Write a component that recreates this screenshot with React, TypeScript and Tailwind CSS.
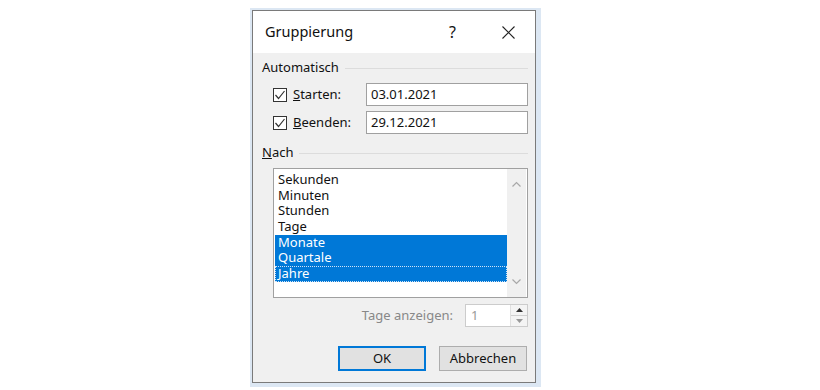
import React from 'react';

const font = { fontFamily: '"Noto Sans", "Open Sans", sans-serif' };

function CheckBox() {
    return (
        <div className="w-[14px] h-[14px] border border-[#333] bg-white flex items-center justify-center">
            <svg width="12" height="12" viewBox="0 0 12 12">
                <path d="M1.5 6 L4.5 9.5 L10.5 2" stroke="#333" strokeWidth="1.2" fill="none" />
            </svg>
        </div>
    );
}

function Chevron({ down }: { down?: boolean }) {
    return (
        <svg width="9" height="6" viewBox="0 0 9 6">
            <path d={down ? 'M0.5 0.5 L4.5 4.5 L8.5 0.5' : 'M0.5 5.5 L4.5 1.5 L8.5 5.5'} stroke="#a8a8a8" strokeWidth="1.2" fill="none" />
        </svg>
    );
}

export default function App() {
    const items = ['Sekunden', 'Minuten', 'Stunden', 'Tage', 'Monate', 'Quartale', 'Jahre'];
    const selected = ['Monate', 'Quartale', 'Jahre'];

    return (
        <div className="w-[820px] h-[390px] bg-white pt-[8px] pl-[250px]" style={font}>
            {/* Window frame with soft shadow */}
            <div className="w-[291px] h-[379px] bg-[#dce7f3] pl-[2px] pt-[2px] pr-[5px] pb-[4px]">
                <div className="w-full h-full border border-[#7a7a7a] bg-[#f0f0f0] flex flex-col text-[13px] text-[#111]">
                    {/* Title bar */}
                    <div className="h-[42px] bg-white flex items-center pl-[12px] pr-[20px] shrink-0">
                        <span className="text-[14.5px] flex-1">Gruppierung</span>
                        <span className="text-[16px] mr-[46px]">?</span>
                        <svg width="13" height="13" viewBox="0 0 13 13">
                            <path d="M0.5 0.5 L12.5 12.5 M12.5 0.5 L0.5 12.5" stroke="#222" strokeWidth="1.1" />
                        </svg>
                    </div>

                    <div className="flex flex-col pl-[9px] pr-[7px] pt-[7px]">
                        {/* Automatisch */}
                        <div className="h-[16px] flex items-center gap-[6px]">
                            <span>Automatisch</span>
                            <div className="flex-1 h-px bg-[#dcdcdc]" />
                        </div>

                        <div className="flex flex-col gap-[5px] mt-[7px] pl-[11px]">
                            <div className="h-[23px] flex items-center">
                                <CheckBox />
                                <span className="ml-[6px] w-[73px]"><span className="underline">S</span>tarten:</span>
                                <div className="flex-1 h-full border border-[#a0a0a0] bg-white flex items-center pl-[4px]">03.01.2021</div>
                            </div>
                            <div className="h-[23px] flex items-center">
                                <CheckBox />
                                <span className="ml-[6px] w-[73px]"><span className="underline">B</span>eenden:</span>
                                <div className="flex-1 h-full border border-[#a0a0a0] bg-white flex items-center pl-[4px]">29.12.2021</div>
                            </div>
                        </div>

                        {/* Nach */}
                        <div className="h-[16px] flex items-center gap-[6px] mt-[11px]">
                            <span><span className="underline">N</span>ach</span>
                            <div className="flex-1 h-px bg-[#dcdcdc]" />
                        </div>

                        {/* List box */}
                        <div className="ml-[11px] mt-[7px] h-[130px] border border-[#a0a0a0] bg-white flex">
                            <div className="flex-1 pt-[3px] pl-[1px]">
                                {items.map((it) => (
                                    <div
                                        key={it}
                                        className={
                                            selected.includes(it)
                                                ? 'h-[15.7px] leading-[15.7px] pl-[3px] bg-[#0078d7] text-white'
                                                : 'h-[15.7px] leading-[15.7px] pl-[3px]'
                                        }
                                    >
                                        {it === 'Jahre' ? (
                                            <div className="h-full border border-dotted border-[#cfe3f7] -ml-[3px] pl-[2px] leading-[13.7px]">{it}</div>
                                        ) : it}
                                    </div>
                                ))}
                            </div>
                            <div className="w-[19px] bg-[#f0f0f0] flex flex-col items-center justify-between py-[12px] mr-px">
                                <Chevron />
                                <Chevron down />
                            </div>
                        </div>

                        {/* Tage anzeigen */}
                        <div className="h-[23px] mt-[6px] flex items-center justify-end gap-[12px]">
                            <span className="text-[#888]">Tage anzeigen:</span>
                            <div className="w-[63px] h-full border border-[#cccccc] bg-white flex">
                                <div className="flex-1 pl-[5px] flex items-center text-[#999]">1</div>
                                <div className="w-[17px] flex flex-col border-l border-[#e0e0e0] bg-[#f4f4f4]">
                                    <div className="flex-1 flex items-center justify-center border-b border-[#d0d0d0]">
                                        <svg width="7" height="4" viewBox="0 0 7 4"><path d="M0 4 L3.5 0 L7 4 Z" fill="#333" /></svg>
                                    </div>
                                    <div className="flex-1 flex items-center justify-center">
                                        <svg width="7" height="4" viewBox="0 0 7 4"><path d="M0 0 L3.5 4 L7 0 Z" fill="#999" /></svg>
                                    </div>
                                </div>
                            </div>
                        </div>

                        {/* Buttons */}
                        <div className="mt-[19px] flex justify-end gap-[13px] pr-px">
                            <button className="w-[88px] h-[25px] border-2 border-[#0078d7] bg-[#e1e1e1]">OK</button>
                            <button className="w-[88px] h-[25px] border border-[#adadad] bg-[#e1e1e1]">Abbrechen</button>
                        </div>
                    </div>
                </div>
            </div>
        </div>
    );
}
